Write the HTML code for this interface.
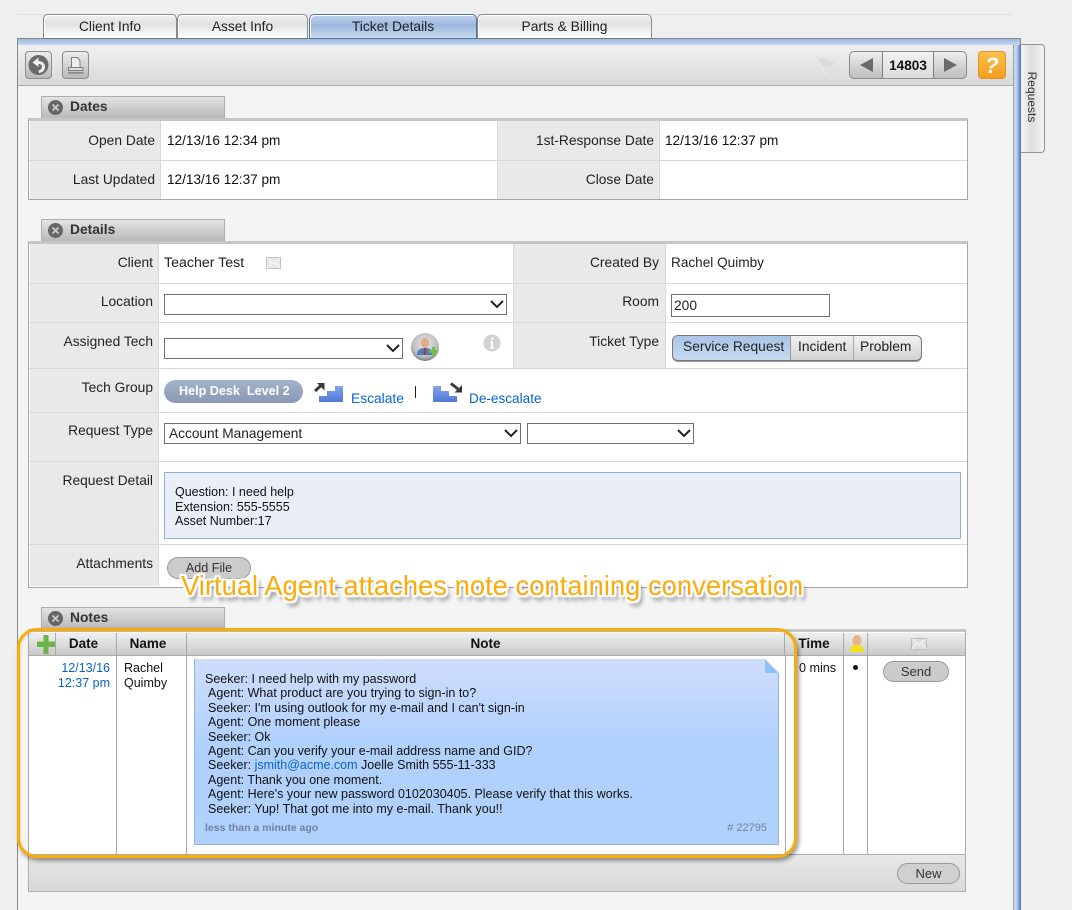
<!DOCTYPE html>
<html><head><meta charset="utf-8"><title>Ticket Details</title>
<style>
*{box-sizing:border-box}
html,body{margin:0;padding:0;width:1072px;height:910px;overflow:hidden;background:#efefef;font-family:"Liberation Sans",Arial,sans-serif;font-size:13.8px;color:#222}
.a{position:absolute}
.t{position:absolute;white-space:nowrap;line-height:16px;margin-top:1px}
.r{text-align:right}
.tab{position:absolute;top:14px;height:25px;border:1px solid #8a8a8a;border-bottom:1px solid #777;border-radius:5px 5px 0 0;background:linear-gradient(#f0f0f0,#e2e2e2 40%,#f6f6f6 80%,#fff);text-align:center;line-height:24px;color:#222;box-shadow:inset 1px 1px 0 #fff}
.tab.on{border-color:#5472a8;background:linear-gradient(#c2d3ea,#9cb9de 45%,#b9cee8 80%,#c8d9ee)}
.sec{position:absolute;left:41px;width:184px;height:22px;border:1px solid #aeaeae;border-bottom:0;background:linear-gradient(#e3e3e3,#b9b9b9);font-weight:bold;color:#333;line-height:19px;padding-left:28px}
.x{position:absolute;left:6px;top:3px;width:15px;height:15px}
.box{position:absolute;background:#fff;border:1px solid #a5a5a5;border-top:3px solid #c6c6c6}
.lb{position:absolute;background:#e9e9e9}
.h{position:absolute;height:1px;background:#d9d9d9}
.v{position:absolute;width:1px;background:#d9d9d9}
.sel{position:absolute;height:21px;background:#fff;border:1px solid #707070;font-size:13.7px;line-height:19px;padding-left:4px;color:#222}
.sel svg{position:absolute;right:2px;top:5px}
.btn{position:absolute;background:#cbcbcb;border:1px solid #9a9a9a;border-radius:12px;text-align:center;color:#333;font-size:13px;line-height:19px}
.tb{position:absolute;top:51px;height:28px;border:1px solid #8b8b8b;border-radius:4px;background:linear-gradient(#ececec,#b9b9b9)}
.th{position:absolute;top:633px;height:22px;background:linear-gradient(#f0f0f0,#c9c9c9);border-right:1px solid #a8a8a8;font-weight:bold;font-size:13.5px;color:#111;text-align:center;line-height:21px}
.cv{position:absolute;top:655px;height:199px;width:1px;background:#aaa}
.n{position:absolute;left:0;white-space:pre;font-size:12.5px;line-height:14.4px;color:#111}
a,.l{color:#0a64c8}
</style></head><body>

<div class="a" style="left:17px;top:14px;width:995px;height:1px;background:#e0e0e0"></div>

<!-- main panel -->
<div class="a" style="left:17px;top:38px;width:1004px;height:872px;border:1px solid #8a8a8a;border-bottom:0;background:#f4f4f4"></div>
<div class="a" style="left:18px;top:39px;width:1002px;height:6px;background:linear-gradient(#9ab8df,#c6d6ec)"></div>
<div class="a" style="left:1013px;top:45px;width:1px;height:865px;background:#a0a0a0"></div>
<div class="a" style="left:1014px;top:45px;width:7px;height:865px;background:linear-gradient(90deg,#cfdcee,#b9cde8 40%,#7f9ecb 70%,#4a70a8)"></div>
<div class="a" style="left:18px;top:45px;width:995px;height:41px;background:linear-gradient(#f0f0f0,#d9d9d9);border-bottom:1px solid #adadad"></div>

<!-- tabs -->
<div class="tab" style="left:43px;width:134px">Client Info</div>
<div class="tab" style="left:177px;width:131px">Asset Info</div>
<div class="tab on" style="left:309px;width:168px">Ticket Details</div>
<div class="tab" style="left:477px;width:175px">Parts &amp; Billing</div>

<!-- requests side tab -->
<div class="a" style="left:1021px;top:44px;width:24px;height:109px;background:linear-gradient(90deg,#f3f3f3,#dedede 45%,#f4f4f4);border:1px solid #909090;border-left:0;border-radius:0 4px 4px 0"></div>
<div class="t" style="left:1002px;top:88px;width:60px;text-align:center;font-size:12px;transform:rotate(90deg);color:#333">Requests</div>

<!-- toolbar -->
<div class="tb" style="left:25px;width:27px"><svg width="25" height="26" viewBox="0 0 25 26"><circle cx="12.500" cy="13" r="10" fill="#6a6a6a"/><path d="M12.500 5.500 L6.500 10.500 L12.500 15 V12 C15 12 16.200 13.200 16 15 C15.800 16.800 14.300 18 12.500 18.200 L13 21 C16.800 20.700 19 18 19 14.800 C19 11.500 16.200 9 12.500 9 Z" fill="#f0f0f0"/></svg></div>
<div class="tb" style="left:62px;width:27px"><svg width="25" height="26" viewBox="0 0 25 26"><path d="M8.500 5.500h6l2.500 3v8h-8.500z" fill="#eee" stroke="#7d7d7d"/><path d="M5.500 15.500h14.500v3H5.500z" fill="#ddd" stroke="#7d7d7d"/><path d="M5 20h15.500v1.800H5z" fill="#8a8a8a"/></svg></div>
<svg class="a" style="left:815px;top:56px" width="22" height="20" viewBox="0 0 22 20"><path d="M2 3 L11 18" stroke="#e6e6e6" stroke-width="2.500"/><path d="M3 3 Q8 0 11 3 T20 5 L17 12 Q12 9 9 12 Z" fill="#dcdcdc"/></svg>
<div class="tb" style="left:849px;width:118px;border-radius:5px;background:linear-gradient(#efefef,#bdbdbd)"></div>
<div class="a" style="left:882px;top:52px;width:1px;height:26px;background:#7d7d7d"></div>
<div class="a" style="left:933px;top:52px;width:1px;height:26px;background:#7d7d7d"></div>
<div class="a" style="left:883px;top:52px;width:50px;height:26px;background:linear-gradient(#f2f2f2,#dcdcdc)"></div>
<svg class="a" style="left:860px;top:58px" width="13" height="14"><path d="M13 0V14L0 7Z" fill="#6a6a6a"/></svg>
<svg class="a" style="left:944px;top:58px" width="13" height="14"><path d="M0 0V14L13 7Z" fill="#6a6a6a"/></svg>
<div class="t" style="left:883px;top:57px;width:50px;text-align:center;font-weight:bold;font-size:13.600px;color:#111">14803</div>
<div class="a" style="left:978px;top:51px;width:28px;height:28px;border:1px solid #df9526;border-radius:4px;background:linear-gradient(#fcc04d,#f59d1f);color:#fff;font-weight:bold;font-style:italic;font-size:22px;line-height:27px;text-align:center">?</div>

<!-- DATES -->
<div class="sec" style="top:96px"><svg class="x" viewBox="0 0 15 15"><circle cx="7.500" cy="7.500" r="7.500" fill="#666"/><path d="M4.500 4.500l6 6M10.500 4.500l-6 6" stroke="#ccc" stroke-width="1.800"/></svg>Dates</div>
<div class="box" style="left:28px;top:118px;width:940px;height:82px"></div>
<div class="lb" style="left:30px;top:121px;width:130px;height:78px"></div>
<div class="lb" style="left:498px;top:121px;width:161px;height:78px"></div>
<div class="h" style="left:29px;top:160px;width:938px"></div>
<div class="v" style="left:160px;top:121px;height:78px"></div>
<div class="v" style="left:497px;top:121px;height:78px"></div>
<div class="v" style="left:659px;top:121px;height:78px"></div>
<div class="t r" style="left:30px;top:132px;width:125px">Open Date</div>
<div class="t" style="left:167px;top:132px;color:#111;font-size:13.600px">12/13/16 12:34 pm</div>
<div class="t r" style="left:500px;top:132px;width:154px">1st-Response Date</div>
<div class="t" style="left:665px;top:132px;color:#111;font-size:13.600px">12/13/16 12:37 pm</div>
<div class="t r" style="left:30px;top:171px;width:125px">Last Updated</div>
<div class="t" style="left:167px;top:171px;color:#111;font-size:13.600px">12/13/16 12:37 pm</div>
<div class="t r" style="left:500px;top:171px;width:154px">Close Date</div>

<!-- DETAILS -->
<div class="sec" style="top:219px"><svg class="x" viewBox="0 0 15 15"><circle cx="7.500" cy="7.500" r="7.500" fill="#666"/><path d="M4.500 4.500l6 6M10.500 4.500l-6 6" stroke="#ccc" stroke-width="1.800"/></svg>Details</div>
<div class="box" style="left:28px;top:241px;width:940px;height:347px"></div>
<div class="lb" style="left:30px;top:244px;width:128px;height:342px"></div>
<div class="lb" style="left:514px;top:244px;width:151px;height:124px"></div>
<div class="h" style="left:29px;top:283px;width:938px"></div>
<div class="h" style="left:29px;top:322px;width:938px"></div>
<div class="h" style="left:29px;top:368px;width:938px"></div>
<div class="h" style="left:29px;top:412px;width:938px"></div>
<div class="h" style="left:29px;top:461px;width:938px"></div>
<div class="h" style="left:29px;top:544px;width:938px"></div>
<div class="v" style="left:158px;top:244px;height:342px"></div>
<div class="v" style="left:513px;top:244px;height:124px"></div>
<div class="v" style="left:665px;top:244px;height:124px"></div>

<div class="t r" style="left:30px;top:254px;width:123px">Client</div>
<div class="t" style="left:164px;top:254px;color:#222;font-size:14.200px">Teacher Test</div>
<svg class="a" style="left:266px;top:257px" width="15" height="12"><rect x=".5" y=".5" width="14" height="11" fill="#e6e6e6" stroke="#c2c2c2"/><path d="M1 1l6.500 5.500L14 1M1 11l4.500-5M14 11L9.500 6" fill="none" stroke="#f8f8f8"/></svg>
<div class="t r" style="left:520px;top:254px;width:139px">Created By</div>
<div class="t" style="left:671px;top:254px;color:#222;font-size:13.600px">Rachel Quimby</div>

<div class="t r" style="left:30px;top:293px;width:123px">Location</div>
<div class="sel" style="left:164px;top:294px;width:343px"><svg width="14" height="9"><path d="M1 1l6 6 6-6" fill="none" stroke="#222" stroke-width="2"/></svg></div>
<div class="t r" style="left:520px;top:293px;width:139px">Room</div>
<div class="a" style="left:671px;top:294px;width:159px;height:23px;background:#fff;border:1px solid #707070;padding-left:2px;line-height:22px;color:#222">200</div>

<div class="t r" style="left:30px;top:333px;width:123px">Assigned Tech</div>
<div class="sel" style="left:164px;top:338px;width:239px"><svg width="14" height="9"><path d="M1 1l6 6 6-6" fill="none" stroke="#222" stroke-width="2"/></svg></div>
<svg class="a" style="left:410px;top:332px" width="30" height="30" viewBox="0 0 30 30"><defs><radialGradient id="g1" cx=".5" cy=".4" r=".65"><stop offset="0" stop-color="#eee"/><stop offset=".7" stop-color="#bbb"/><stop offset="1" stop-color="#666"/></radialGradient></defs><circle cx="15" cy="15" r="14" fill="url(#g1)"/><path d="M7 23c0-5 3-7 8-7s8 2 8 7z" fill="#4a7ec4"/><path d="M14 16h2v7h-2z" fill="#b33"/><ellipse cx="15" cy="11" rx="4.200" ry="5" fill="#e0ad8a"/><path d="M19 18h3v-3h3v3h3v3h-3v3h-3v-3h-3z" fill="#6fbf4a"/></svg>
<svg class="a" style="left:483px;top:334px" width="18" height="18" viewBox="0 0 18 18"><circle cx="9" cy="9" r="8.500" fill="#d2d2d2"/><path d="M7 7h3v6h1v1.500H7V13h1V8.500H7z M8 3.500h2.200v2.200H8z" fill="#fff"/></svg>
<div class="t r" style="left:520px;top:333px;width:139px">Ticket Type</div>
<div class="a" style="left:672px;top:335px;width:250px;height:26px;border:1px solid #777;border-radius:6px;background:linear-gradient(#f2f2f2,#d2d2d2);overflow:hidden;box-shadow:0 1px 0 #999">
  <div class="a" style="left:0;top:0;width:118px;height:24px;background:linear-gradient(#a9c4e6,#c6daf1);border-right:1px solid #999"></div>
  <div class="a" style="left:180px;top:0;width:1px;height:24px;background:#aaa"></div>
  <div class="t" style="left:10px;top:2px;color:#222">Service Request</div>
  <div class="t" style="left:125px;top:2px;color:#222">Incident</div>
  <div class="t" style="left:187px;top:2px;color:#222">Problem</div>
</div>

<div class="t r" style="left:30px;top:379px;width:123px">Tech Group</div>
<div class="a" style="left:164px;top:380px;width:139px;height:23px;border-radius:12px;background:linear-gradient(#a5b2cb,#8898b6);color:#fff;font-weight:bold;font-size:12.600px;line-height:23px;white-space:pre;padding-left:15px">Help Desk  Level 2</div>
<svg class="a" style="left:313px;top:381px;filter:blur(.35px)" width="32" height="24" viewBox="0 0 32 24"><defs><linearGradient id="st" x1="0" y1="0" x2="0" y2="1"><stop offset="0" stop-color="#86a5ec"/><stop offset="1" stop-color="#5078d8"/></linearGradient></defs><path d="M6 21V15H14V10H22V5H30V21Z" fill="url(#st)"/><path d="M2 10L8 4.500" stroke="#3a3a3a" stroke-width="3"/><path d="M4 2H11.500V9.500Z" fill="#3a3a3a"/></svg>
<div class="t l" style="left:351px;top:390px">Escalate</div>
<div class="a" style="left:415px;top:386px;width:1px;height:12px;background:#222"></div>
<svg class="a" style="left:433px;top:381px;filter:blur(.35px)" width="32" height="24" viewBox="0 0 32 24"><path d="M0 5H8V10H16V15H24V21H0Z" fill="url(#st)"/><path d="M18 2.500L25 8" stroke="#3a3a3a" stroke-width="3"/><path d="M29 4V11.500H21.500Z" fill="#3a3a3a"/></svg>
<div class="t l" style="left:469px;top:390px;font-size:13.600px">De-escalate</div>

<div class="t r" style="left:30px;top:422px;width:123px">Request Type</div>
<div class="sel" style="left:164px;top:423px;width:357px">Account Management<svg width="14" height="9"><path d="M1 1l6 6 6-6" fill="none" stroke="#222" stroke-width="2"/></svg></div>
<div class="sel" style="left:527px;top:423px;width:167px"><svg width="14" height="9"><path d="M1 1l6 6 6-6" fill="none" stroke="#222" stroke-width="2"/></svg></div>

<div class="t r" style="left:30px;top:472px;width:123px">Request Detail</div>
<div class="a" style="left:164px;top:472px;width:797px;height:67px;background:#e9eef7;border:1px solid #8fb2dc"></div>
<div class="t" style="left:175px;top:484px;font-size:12.500px;line-height:14.500px;color:#111">Question: I need help<br>Extension: 555-5555<br>Asset Number:17</div>

<div class="t r" style="left:30px;top:555px;width:123px">Attachments</div>
<div class="btn" style="left:167px;top:557px;width:84px;height:22px;font-size:12.600px;line-height:20px">Add File</div>

<!-- NOTES -->
<div class="sec" style="top:607px"><svg class="x" viewBox="0 0 15 15"><circle cx="7.500" cy="7.500" r="7.500" fill="#666"/><path d="M4.500 4.500l6 6M10.500 4.500l-6 6" stroke="#ccc" stroke-width="1.800"/></svg>Notes</div>
<div class="a" style="left:28px;top:629px;width:938px;height:226px;background:#fff;border:1px solid #a8a8a8;border-top:3px solid #c6c6c6"></div>
<div class="th" style="left:29px;width:27px"></div>
<div class="th" style="left:56px;width:61px;padding-right:5px">Date</div>
<div class="th" style="left:117px;width:70px;padding-right:7px">Name</div>
<div class="th" style="left:187px;width:598px">Note</div>
<div class="th" style="left:785px;width:59px">Time</div>
<div class="th" style="left:844px;width:24px"></div>
<div class="th" style="left:868px;width:97px;border-right:0"></div>
<div class="a" style="left:29px;top:655px;width:936px;height:1px;background:#aaa"></div>
<div class="cv" style="left:116px"></div>
<div class="cv" style="left:186px"></div>
<div class="cv" style="left:785px"></div>
<div class="cv" style="left:843px"></div>
<div class="cv" style="left:867px"></div>
<svg class="a" style="left:37px;top:635px" width="18" height="19"><path d="M6.500 0h5v6.500H18v5.500h-6.500V19h-5v-7H0V6.500h6.500z" fill="#6cb24f"/></svg>
<svg class="a" style="left:850px;top:635px" width="14" height="18" viewBox="0 0 14 18"><ellipse cx="7" cy="5.500" rx="4.500" ry="5.500" fill="#e8b48e"/><path d="M0 17c0-5 2-7 7-7s7 2 7 7z" fill="#f0e020"/></svg>
<svg class="a" style="left:911px;top:638px" width="16" height="12"><rect x=".5" y=".5" width="15" height="11" fill="#dfdfdf" stroke="#bbb"/><path d="M1 1l7 5.500L15 1M1 11l5-6M15 11l-5-6" fill="none" stroke="#f6f6f6"/></svg>
<div class="t l r" style="left:56px;top:660px;width:54px;font-size:12.500px;line-height:14.500px">12/13/16<br>12:37 pm</div>
<div class="t" style="left:124px;top:660px;font-size:12.500px;line-height:14.500px;color:#111">Rachel<br>Quimby</div>
<div class="t" style="left:799px;top:660px;margin-top:0;font-size:12.600px;color:#111">0 mins</div>
<div class="a" style="left:853px;top:665px;width:5px;height:5px;border-radius:50%;background:#111"></div>
<div class="btn" style="left:883px;top:661px;width:66px;height:21px">Send</div>

<!-- note -->
<div class="a" style="left:194px;top:659px;width:585px;height:186px;background:linear-gradient(#d0ddfc,#b1d1fd 45%);border:1px solid #8fb4e6;border-top:0"></div>
<svg class="a" style="left:765px;top:659px" width="14" height="14"><path d="M0 0L14 14H0V0Z" fill="#8fc0fb"/><path d="M0 0H14V14Z" fill="#fff"/></svg>
<div class="a" style="left:205px;top:672px;width:560px;height:150px">
<div class="n" style="top:0;left:0">Seeker: I need help with my password</div>
<div class="n" style="top:14.400px;left:3px">Agent: What product are you trying to sign-in to?</div>
<div class="n" style="top:28.800px;left:3px">Seeker: I'm using outlook for my e-mail and I can't sign-in</div>
<div class="n" style="top:43.200px;left:3px">Agent: One moment please</div>
<div class="n" style="top:57.600px;left:3px">Seeker: Ok</div>
<div class="n" style="top:72px;left:3px">Agent: Can you verify your e-mail address name and GID?</div>
<div class="n" style="top:86.400px;left:3px">Seeker: <span class="l">jsmith@acme.com</span> Joelle Smith 555-11-333</div>
<div class="n" style="top:100.800px;left:3px">Agent: Thank you one moment.</div>
<div class="n" style="top:115.200px;left:3px">Agent: Here's your new password 0102030405. Please verify that this works.</div>
<div class="n" style="top:129.600px;left:3px">Seeker: Yup! That got me into my e-mail. Thank you!!</div>
</div>
<div class="t" style="left:205px;top:820px;margin-top:0;font-size:10.500px;font-weight:bold;color:#71809f">less than a minute ago</div>
<div class="t r" style="left:667px;top:820px;margin-top:0;width:100px;font-size:11px;color:#71809f"># 22795</div>

<!-- footer -->
<div class="a" style="left:28px;top:854px;width:938px;height:38px;background:linear-gradient(#e8e8e8,#d8d8d8);border:1px solid #aeaeae"></div>
<div class="btn" style="left:897px;top:863px;width:63px;height:21px;background:#d0d0d0">New</div>

<!-- annotation -->
<div class="a" style="left:17px;top:628px;width:780px;height:230px;border:3px solid #fbab06;border-radius:20px;box-shadow:2px 3px 4px rgba(0,0,0,.4),inset 1px 1px 2px rgba(0,0,0,.1)"></div>
<div class="t" style="left:181px;top:570px;margin-top:0;line-height:32px;font-size:27.400px;color:#fbab0a;text-shadow:2px 0 1px #fff,-2px 0 1px #fff,0 2px 1px #fff,0 -2px 1px #fff,2px 2px 1px #fff,-2px -2px 1px #fff,2px -2px 1px #fff,-2px 2px 1px #fff,3px 5px 4px rgba(0,0,0,.55)">Virtual Agent attaches note containing conversation</div>

</body></html>
